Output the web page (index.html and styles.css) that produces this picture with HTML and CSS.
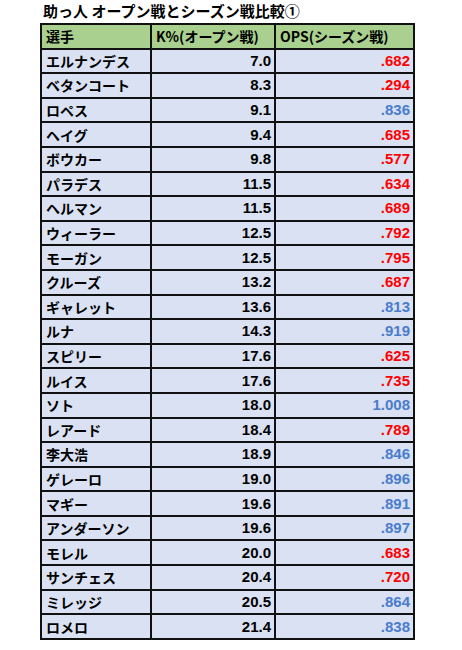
FILE: index.html
```html
<!DOCTYPE html>
<html lang="ja">
<head>
<meta charset="utf-8">
<link rel="stylesheet" href="styles.css">
</head>
<body>
<div class="page">
  <h1 class="title">助っ人 オープン戦とシーズン戦比較①</h1>
  <table class="stats">
    <colgroup><col class="c1"><col class="c2"><col class="c3"></colgroup>
    <thead>
      <tr><th>選手</th><th>K%(オープン戦)</th><th>OPS(シーズン戦)</th></tr>
    </thead>
    <tbody>
      <tr><td class="name">エルナンデス</td><td class="num">7.0</td><td class="num red">.682</td></tr>
      <tr><td class="name">ベタンコート</td><td class="num">8.3</td><td class="num red">.294</td></tr>
      <tr><td class="name">ロペス</td><td class="num">9.1</td><td class="num blue">.836</td></tr>
      <tr><td class="name">ヘイグ</td><td class="num">9.4</td><td class="num red">.685</td></tr>
      <tr><td class="name">ボウカー</td><td class="num">9.8</td><td class="num red">.577</td></tr>
      <tr><td class="name">パラデス</td><td class="num">11.5</td><td class="num red">.634</td></tr>
      <tr><td class="name">ヘルマン</td><td class="num">11.5</td><td class="num red">.689</td></tr>
      <tr><td class="name">ウィーラー</td><td class="num">12.5</td><td class="num red">.792</td></tr>
      <tr><td class="name">モーガン</td><td class="num">12.5</td><td class="num red">.795</td></tr>
      <tr><td class="name">クルーズ</td><td class="num">13.2</td><td class="num red">.687</td></tr>
      <tr><td class="name">ギャレット</td><td class="num">13.6</td><td class="num blue">.813</td></tr>
      <tr><td class="name">ルナ</td><td class="num">14.3</td><td class="num blue">.919</td></tr>
      <tr><td class="name">スピリー</td><td class="num">17.6</td><td class="num red">.625</td></tr>
      <tr><td class="name">ルイス</td><td class="num">17.6</td><td class="num red">.735</td></tr>
      <tr><td class="name">ソト</td><td class="num">18.0</td><td class="num blue">1.008</td></tr>
      <tr><td class="name">レアード</td><td class="num">18.4</td><td class="num red">.789</td></tr>
      <tr><td class="name">李大浩</td><td class="num">18.9</td><td class="num blue">.846</td></tr>
      <tr><td class="name">ゲレーロ</td><td class="num">19.0</td><td class="num blue">.896</td></tr>
      <tr><td class="name">マギー</td><td class="num">19.6</td><td class="num blue">.891</td></tr>
      <tr><td class="name">アンダーソン</td><td class="num">19.6</td><td class="num blue">.897</td></tr>
      <tr><td class="name">モレル</td><td class="num">20.0</td><td class="num red">.683</td></tr>
      <tr><td class="name">サンチェス</td><td class="num">20.4</td><td class="num red">.720</td></tr>
      <tr><td class="name">ミレッジ</td><td class="num">20.5</td><td class="num blue">.864</td></tr>
      <tr><td class="name">ロメロ</td><td class="num">21.4</td><td class="num blue">.838</td></tr>
    </tbody>
  </table>
</div>
</body>
</html>
```
FILE: styles.css
```css
html, body {
  margin: 0;
  padding: 0;
  background: #ffffff;
}
.page {
  padding: 2px 0 0 40px;
  font-family: "Liberation Sans", "Noto Sans CJK JP", sans-serif;
  color: #000;
}
.title {
  margin: 0 0 3px 3px;
  font-family: "Noto Sans CJK JP", sans-serif;
  font-size: 15px;
  font-weight: bold;
  line-height: 18px;
  height: 18px;
}
.stats {
  border-collapse: collapse;
  table-layout: fixed;
  width: 373px;
  border: 2px solid #000;
}
.c1 { width: 110px; }
.c2 { width: 124px; }
.c3 { width: 139px; }
.stats th,
.stats td {
  border: 2px solid #111;
  height: 22.6px;
  padding: 0 3px 0 4px;
  font-size: 14px;
  line-height: 18px;
  font-weight: bold;
  white-space: nowrap;
  overflow: hidden;
}
.stats th {
  background: #a9d08e;
  text-align: left;
  font-family: "Noto Sans CJK JP", sans-serif;
  font-weight: bold;
}
.stats td {
  background: #d9e1f2;
}
.name {
  font-family: "Noto Sans CJK JP", sans-serif;
}
.stats td.num {
  text-align: right;
  font-family: "Liberation Sans", sans-serif;
  font-size: 15px;
}
.red { color: #ff0000; }
.blue { color: #4a7ccc; }
```
